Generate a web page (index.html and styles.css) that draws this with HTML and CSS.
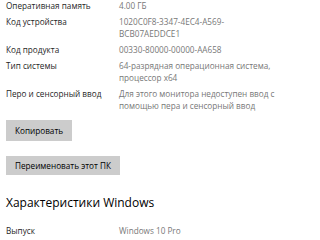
FILE: index.html
```html
<!DOCTYPE html>
<html lang="ru">
<head>
<meta charset="utf-8">
<link rel="stylesheet" href="styles.css">
</head>
<body>
<div class="page">
  <dl class="specs">
    <div class="row"><dt>Оперативная память</dt><dd>4.00 ГБ</dd></div>
    <div class="row"><dt>Код устройства</dt><dd>1020C0F8-3347-4EC4-A569-<br>BCB07AEDDCE1</dd></div>
    <div class="row"><dt>Код продукта</dt><dd>00330-80000-00000-AA658</dd></div>
    <div class="row"><dt>Тип системы</dt><dd>64-разрядная операционная система,<br>процессор x64</dd></div>
    <div class="row"><dt>Перо и сенсорный ввод</dt><dd>Для этого монитора недоступен ввод с<br>помощью пера и сенсорный ввод</dd></div>
  </dl>
  <button class="btn btn-copy">Копировать</button>
  <button class="btn btn-rename">Переименовать этот ПК</button>
  <h2 class="heading">Характеристики Windows</h2>
  <dl class="specs specs-win">
    <div class="row"><dt>Выпуск</dt><dd>Windows 10 Pro</dd></div>
  </dl>
</div>
</body>
</html>
```
FILE: styles.css
```css
html, body {
  margin: 0;
  padding: 0;
  background: #ffffff;
}
body {
  font-family: "Open Sans", "Noto Sans", sans-serif;
  font-size: 8.2px;
  color: #1a1a1a;
  overflow: hidden;
  width: 320px;
  height: 240px;
}
.page {
  padding: 0 0 0 6px;
  display: flex;
  flex-direction: column;
  align-items: flex-start;
}
.specs {
  margin: 0;
  display: flex;
  flex-direction: column;
  gap: 4px;
  width: 314px;
}
.row {
  display: grid;
  grid-template-columns: 113px 1fr;
  line-height: 12px;
}
dt {
  margin: 0;
  color: #1f1f1f;
}
dd {
  margin: 0;
  color: #777777;
}
.btn {
  font-family: inherit;
  font-size: 8.2px;
  color: #000;
  background: #cccccc;
  border: none;
  border-radius: 0;
  padding: 0 9px;
  margin: 0;
  height: 21px;
  line-height: 21px;
}
.btn-copy {
  margin-top: 8px;
}
.btn-rename {
  margin-top: 15px;
  height: 19px;
  line-height: 19px;
}
.heading {
  font-size: 12px;
  font-weight: 400;
  color: #000;
  margin: 20px 0 0 0;
  line-height: 16px;
}
.specs-win {
  margin-top: 14px;
}
```
